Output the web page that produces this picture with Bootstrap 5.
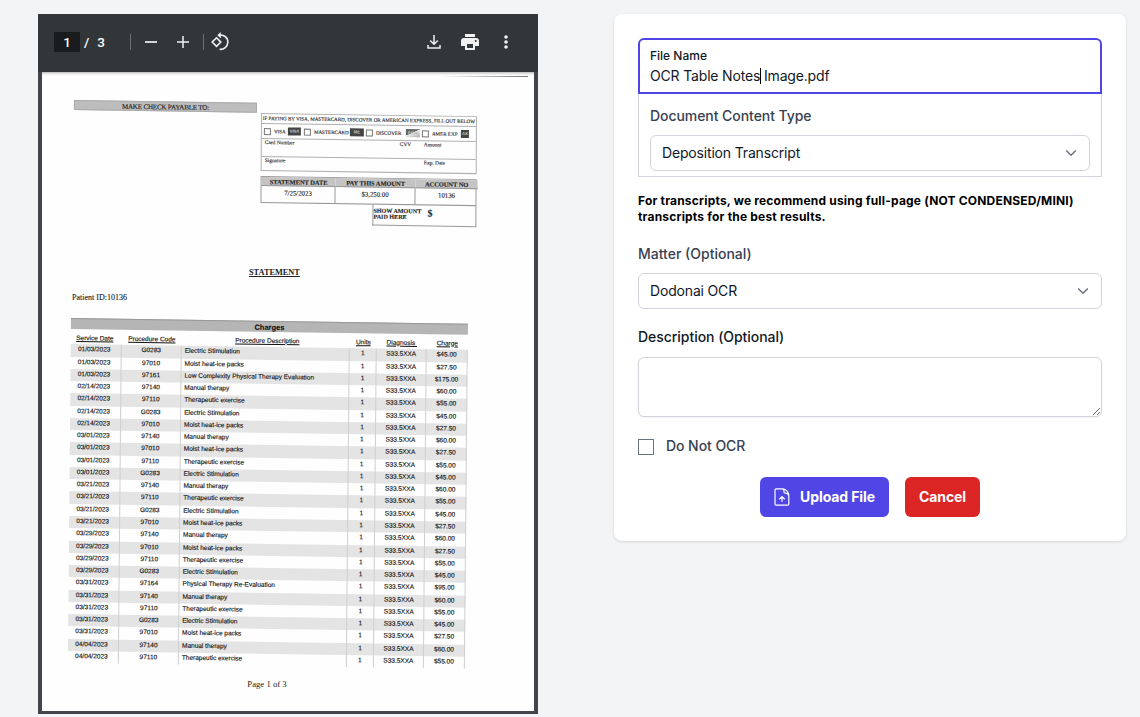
<!DOCTYPE html>
<html lang="en">
<head>
<meta charset="utf-8">
<meta name="viewport" content="width=device-width, initial-scale=1">
<title>Upload File</title>
<link href="https://cdn.jsdelivr.net/npm/bootstrap@5.3.0/dist/css/bootstrap.min.css" rel="stylesheet">
<style>
body{background:#f2f4f6;font-family:Inter,"Liberation Sans",sans-serif;font-size:14px;line-height:20px;color:#111827;overflow:hidden}
.layout{padding:14px 14px 0 38px}
/* PDF viewer */
.viewer{width:500px;height:700px;background:#42464a}
.toolbar{height:58px;background:#323639;color:#fff;font-family:Roboto,sans-serif;font-size:13.5px;font-weight:500;padding:0 22px 2px 16px}
.toolbar svg{display:block;flex:none}
.pagebox{width:26px;height:20px;background:#191b1c;text-align:center;line-height:21px}
.rule{width:1px;height:16px;background:#6d7073}
.sheet{width:492px;height:639px;margin:0 4px;background:#fefefe;box-shadow:inset 0 3px 3px -2px #aaa;color:#222;font-family:"Liberation Serif",serif;overflow:hidden}
.scanline{height:1px;width:87px;margin:4px 6px 0 auto;background:linear-gradient(90deg,#fff,#777)}
.tilt{transform:matrix(1,.0145,-.006,1,0,0);transform-origin:0 0}
.payable{width:183px;height:10px;margin:23px 0 0 32px;background:#bdbdbd;border:1px solid #aaa;font-size:7px;line-height:11px;text-align:center;color:#222;letter-spacing:-.17px;-webkit-text-stroke:.15px #222}
.payform{width:216px;margin:35.5px 0 0 4px;font-size:5.4px;line-height:8px;-webkit-text-stroke:.12px #222}
.ruled{border:1px solid #b0b0b0}
.ruled>div+div{border-top:1px solid #b0b0b0}
.tick{width:7px;height:7px;border:1px solid #777;flex:none}
.brand{height:8px;color:#fff;background:#444;font:bold 4px/8px "Liberation Sans",sans-serif;text-align:center;flex:none}
.amounts{margin-top:4.5px;display:grid;grid-template-columns:74px 80px 62px;border:1px solid #999;font-size:6.8px;text-align:center}
.amounts>div{border-right:1px solid #999;height:16px;line-height:13px;white-space:nowrap}
.amounts>.hd{height:9.5px;line-height:10px;font-size:6.5px;background:#c4c4c4;font-weight:bold;color:#222;border-bottom:1px solid #999;border-right:0;letter-spacing:-.08px}
.amounts>div:nth-child(3n){border-right:0}
.paid{width:104px;height:21px;border:1px solid #999;margin:0 0 0 auto;border-top:0;font-weight:bold;font-size:6.1px;line-height:6px}
.stmt{font-weight:bold;font-size:8.3px;line-height:10px;text-decoration:underline;width:60px;margin:46px 0 0 207px;white-space:nowrap}
.patient{font-size:8px;line-height:10px;margin:14.5px 0 0 30px;-webkit-text-stroke:.12px #222}
.charges{width:397px;margin:15.500px 0 0 29px;font-family:"Liberation Sans",sans-serif;font-size:6.5px;line-height:9px;transform:matrix(1,.0145,-.0092,1,0,0);transform-origin:0 0;color:#111;-webkit-text-stroke:.14px #111}
.charges .bar{height:11px;background:#b5b5b5;border-top:1px solid #999;text-align:center;font-weight:bold;font-size:7.5px;line-height:12px}
.line{display:grid;grid-template-columns:51px 60px 168px 27px 50px 41px;height:12.27px;text-align:center;white-space:nowrap}
.line>span{border-right:1px solid #cfcfcf}
.line>span:first-child{padding-right:3px}
.line>span:nth-child(3){text-align:left;padding-left:3px}
.line:nth-child(odd){background:#e4e4e4}
.line.heads{height:15.3px;background:none;text-decoration:underline;padding-top:3.5px}
.line.heads>span{border:0}
.line.heads>span:nth-child(3){text-align:center}
.foot{font-size:8.7px;line-height:10px;text-align:center;width:60px;margin:16px 0 0 195px;white-space:nowrap}
/* Upload form */
.panel{width:512px;height:527px;background:#fff;border-radius:8px;padding:24px;box-shadow:0 1px 3px rgba(0,0,0,.12)}
.ink{color:#374151;letter-spacing:-.06px}
.fname{border:2px solid #4f46e5;border-radius:6px 6px 0 0;height:56px;padding:8px 10px;position:relative}
.fname label{display:block;font-size:12px;line-height:16px;font-weight:500}
.fname .value{margin-top:2px;letter-spacing:-.17px}
.caret{display:inline-block;width:1px;height:16px;background:#000;margin-right:-1px;vertical-align:-3px}
.ctype{border:1px solid #d1d5db;border-top:0;height:83px;padding:12px 11px 0}
.pick{height:36px;border:1px solid #d1d5db;border-radius:6px;padding:0 12px 0 11px;letter-spacing:-.17px}
.notice{font-size:12px;line-height:16px;font-weight:700;color:#000;margin:16px 0 19px;letter-spacing:.19px}
textarea.desc{height:60px;width:100%;border:1px solid #d1d5db;border-radius:6px;display:block;box-shadow:0 1px 2px rgba(0,0,0,.05)}
.box{width:16px;height:16px;border:1px solid #6b7280}
.act{height:40px;border-radius:6px;border:0;color:#fff;font-size:14px;font-weight:700;padding:0 14px;letter-spacing:-.1px}
.act.up{background:#4f46e5;width:129px}
.act.no{background:#dc2626;width:75px}
</style>
</head>
<body>
<main class="layout d-flex justify-content-between align-items-start">
  <section class="viewer">
    <div class="toolbar d-flex align-items-center">
      <span class="pagebox">1</span><span style="margin-left:4px">/</span><span style="margin-left:8px">3</span>
      <span class="rule" style="margin-left:25px"></span>
      <svg style="margin-left:13px" width="14" height="14" stroke="#f1f1f1" stroke-width="1.7"><path d="M1 7h12"/></svg>
      <svg style="margin-left:18px" width="14" height="14" stroke="#f1f1f1" stroke-width="1.5"><path d="M1 7h12M7 1v12"/></svg>
      <span class="rule" style="margin-left:13px"></span>
      <svg style="margin-left:6px" width="20" height="20" viewBox="0 0 20 20" fill="none" stroke="#f1f1f1" stroke-width="1.6"><path d="M6.5 5.8L10.8 10.1L6.5 14.4L2.2 10.1ZM8.6 3.2C14 2 18 6 17.8 10.5C17.6 14.5 14 17.8 9.6 17.3"/><path d="M10.8 0v6.4L7.3 3.2z" fill="#f1f1f1" stroke="none"/></svg>
      <svg class="ms-auto" width="14" height="14" viewBox="0 0 14 14" fill="none" stroke="#f1f1f1" stroke-width="1.5"><path d="M7 0v9M3.2 5.5L7 9.2l3.8-3.7M1 10v3h12v-3"/></svg>
      <svg style="margin-left:20px" width="18" height="18" viewBox="0 0 18 18"><path fill="#f1f1f1" d="M4 1h10v3H4zM3 5h12a3 3 0 0 1 3 3v5h-4v4H4v-4H0V8a3 3 0 0 1 3-3z"/><path fill="#323639" d="M6 11h6v4H6z"/><circle cx="14.7" cy="8" r="1" fill="#323639"/></svg>
      <svg style="margin-left:22px;margin-right:5px" width="10" height="16" fill="#f1f1f1"><circle cx="5" cy="3" r="1.8"/><circle cx="5" cy="8" r="1.8"/><circle cx="5" cy="13" r="1.8"/></svg>
    </div>
    <div class="sheet d-flow-root">
      <div class="d-flex flex-column" style="height:10px"><div class="scanline"></div></div>
      <div class="d-flex align-items-start" style="height:145px;margin-top:-5px">
        <div class="payable tilt">MAKE CHECK PAYABLE TO:</div>
        <div class="payform tilt">
          <div class="ruled">
            <div style="height:9px;text-align:center;white-space:nowrap;line-height:9px;font-size:5.1px;letter-spacing:-.03px">IF PAYING BY VISA, MASTERCARD, DISCOVER OR AMERICAN EXPRESS, FILL OUT BELOW</div>
            <div class="d-flex align-items-center" style="height:15px;padding-left:2px;font-size:5.1px">
              <i class="tick"></i><span style="width:17px;padding-left:3px">VISA</span><i class="brand" style="width:13px">VISA</i>
              <i class="tick" style="margin-left:3px"></i><span style="width:39px;padding-left:3px">MASTERCARD</span><i class="brand" style="width:14px">MC</i>
              <i class="tick" style="margin-left:2px"></i><span style="width:33px;padding-left:3px">DISCOVER</span><i class="brand" style="width:14px;background:linear-gradient(155deg,#666 45%,#eee 46%,#aaa)">DISC</i>
              <i class="tick" style="margin-left:2px"></i><span style="width:32px;padding-left:3px;white-space:nowrap">AMER EXP</span><i class="brand" style="width:8px">AX</i>
            </div>
            <div class="d-flex" style="height:17.5px;padding-left:3px;line-height:7px"><span style="width:135px">Card Number</span><span style="width:24px">CVV</span><span>Amount</span></div>
            <div class="d-flex" style="height:14.5px;padding-left:3px;line-height:7px"><span style="width:159px">Signature</span><span>Exp. Date</span></div>
          </div>
          <div class="amounts">
            <div class="hd">STATEMENT DATE</div><div class="hd">PAY THIS AMOUNT</div><div class="hd">ACCOUNT NO</div>
            <div>7/25/2023</div><div>$3,250.00</div><div>10136</div>
          </div>
          <div class="paid d-flex"><span style="padding-top:3px;width:54px;white-space:nowrap">SHOW AMOUNT<br>PAID HERE</span><span style="font-size:10px;line-height:16px">$</span></div>
        </div>
      </div>
      <div class="stmt">STATEMENT</div>
      <div class="patient">Patient ID:10136</div>
      <div class="charges">
        <div class="bar">Charges</div>
        <div class="line heads"><span>Service Date</span><span>Procedure Code</span><span>Procedure Description</span><span>Units</span><span>Diagnosis&nbsp;</span><span>Charge</span></div>
        <div id="rows"></div>
      </div>
      <div class="foot">Page 1 of 3</div>
    </div>
  </section>

  <section class="panel">
    <div class="fname"><label>File Name</label><div class="value">OCR Table Notes<i class="caret"></i> Image.pdf</div></div>
    <div class="ctype">
      <div class="ink" style="font-weight:500">Document Content Type</div>
      <div class="pick d-flex align-items-center justify-content-between" style="margin-top:9px"><span>Deposition Transcript</span>
        <svg width="12" height="8" fill="none" stroke="#6b7280" stroke-width="1.5"><path d="M1.2 1.5L6 6.3l4.8-4.8"/></svg></div>
    </div>
    <p class="notice">For transcripts, we recommend using full-page (NOT CONDENSED/MINI)<br>transcripts for the best results.</p>
    <div class="ink" style="font-weight:500;letter-spacing:0">Matter (Optional)</div>
    <div class="pick d-flex align-items-center justify-content-between" style="margin-top:9px"><span>Dodonai OCR</span>
      <svg width="12" height="8" fill="none" stroke="#6b7280" stroke-width="1.5"><path d="M1.2 1.5L6 6.3l4.8-4.8"/></svg></div>
    <div style="font-weight:500;margin:18px 0 10px;letter-spacing:-.04px">Description (Optional)</div>
    <textarea class="desc"></textarea>
    <div class="d-flex align-items-center ink" style="margin-top:19px;font-weight:500"><span class="box" style="margin-right:12px;margin-top:2px"></span>Do Not OCR</div>
    <div class="d-flex justify-content-center gap-3" style="margin-top:21px">
      <button class="act up d-flex align-items-center justify-content-between"><svg width="16" height="18" viewBox="0 0 16 18" fill="none" stroke="#fff" stroke-width="1.2"><path d="M9 .8H2.2Q1 .8 1 2v14q0 1.2 1.2 1.2h11.4q1.2 0 1.2-1.2V7.500Q14.300 2 9 .8ZM8.500.8Q10 1.500 10 3v1q0 1.200 1.200 1.200h.8q2.200.3 2.800 2.500M8 13.800V9M5.300 11.300L8 8.700l2.700 2.600"/></svg>Upload File</button>
      <button class="act no text-nowrap">Cancel</button>
    </div>
  </section>
</main>
<script>
const procedures = {G0283:'Electric Stimulation 45.00','97010':'Moist heat-ice packs 27.50','97161':'Low Complexity Physical Therapy Evaluation 175.00','97140':'Manual therapy 60.00','97110':'Therapeutic exercise 55.00','97164':'Physical Therapy Re-Evaluation 95.00'};
const visits = {'01/03':'G0283 97010 97161','02/14':'97140 97110 G0283 97010','03/01':'97140 97010 97110 G0283','03/21':'97140 97110 G0283 97010','03/29':'97140 97010 97110 G0283','03/31':'97164 97140 97110 G0283 97010','04/04':'97140 97110'};
let html = '';
for (const [day, codes] of Object.entries(visits))
  for (const code of codes.split(' ')) {
    const [, name, price] = procedures[code].match(/(.*) (\S+)$/);
    html += `<div class="line"><span>${day}/2023</span><span>${code}</span><span>${name}</span><span>1</span><span>S33.5XXA</span><span>$${price}</span></div>`;
  }
document.getElementById('rows').innerHTML = html;
</script>
<script src="https://cdn.jsdelivr.net/npm/bootstrap@5.3.0/dist/js/bootstrap.bundle.min.js"></script>
</body>
</html>
